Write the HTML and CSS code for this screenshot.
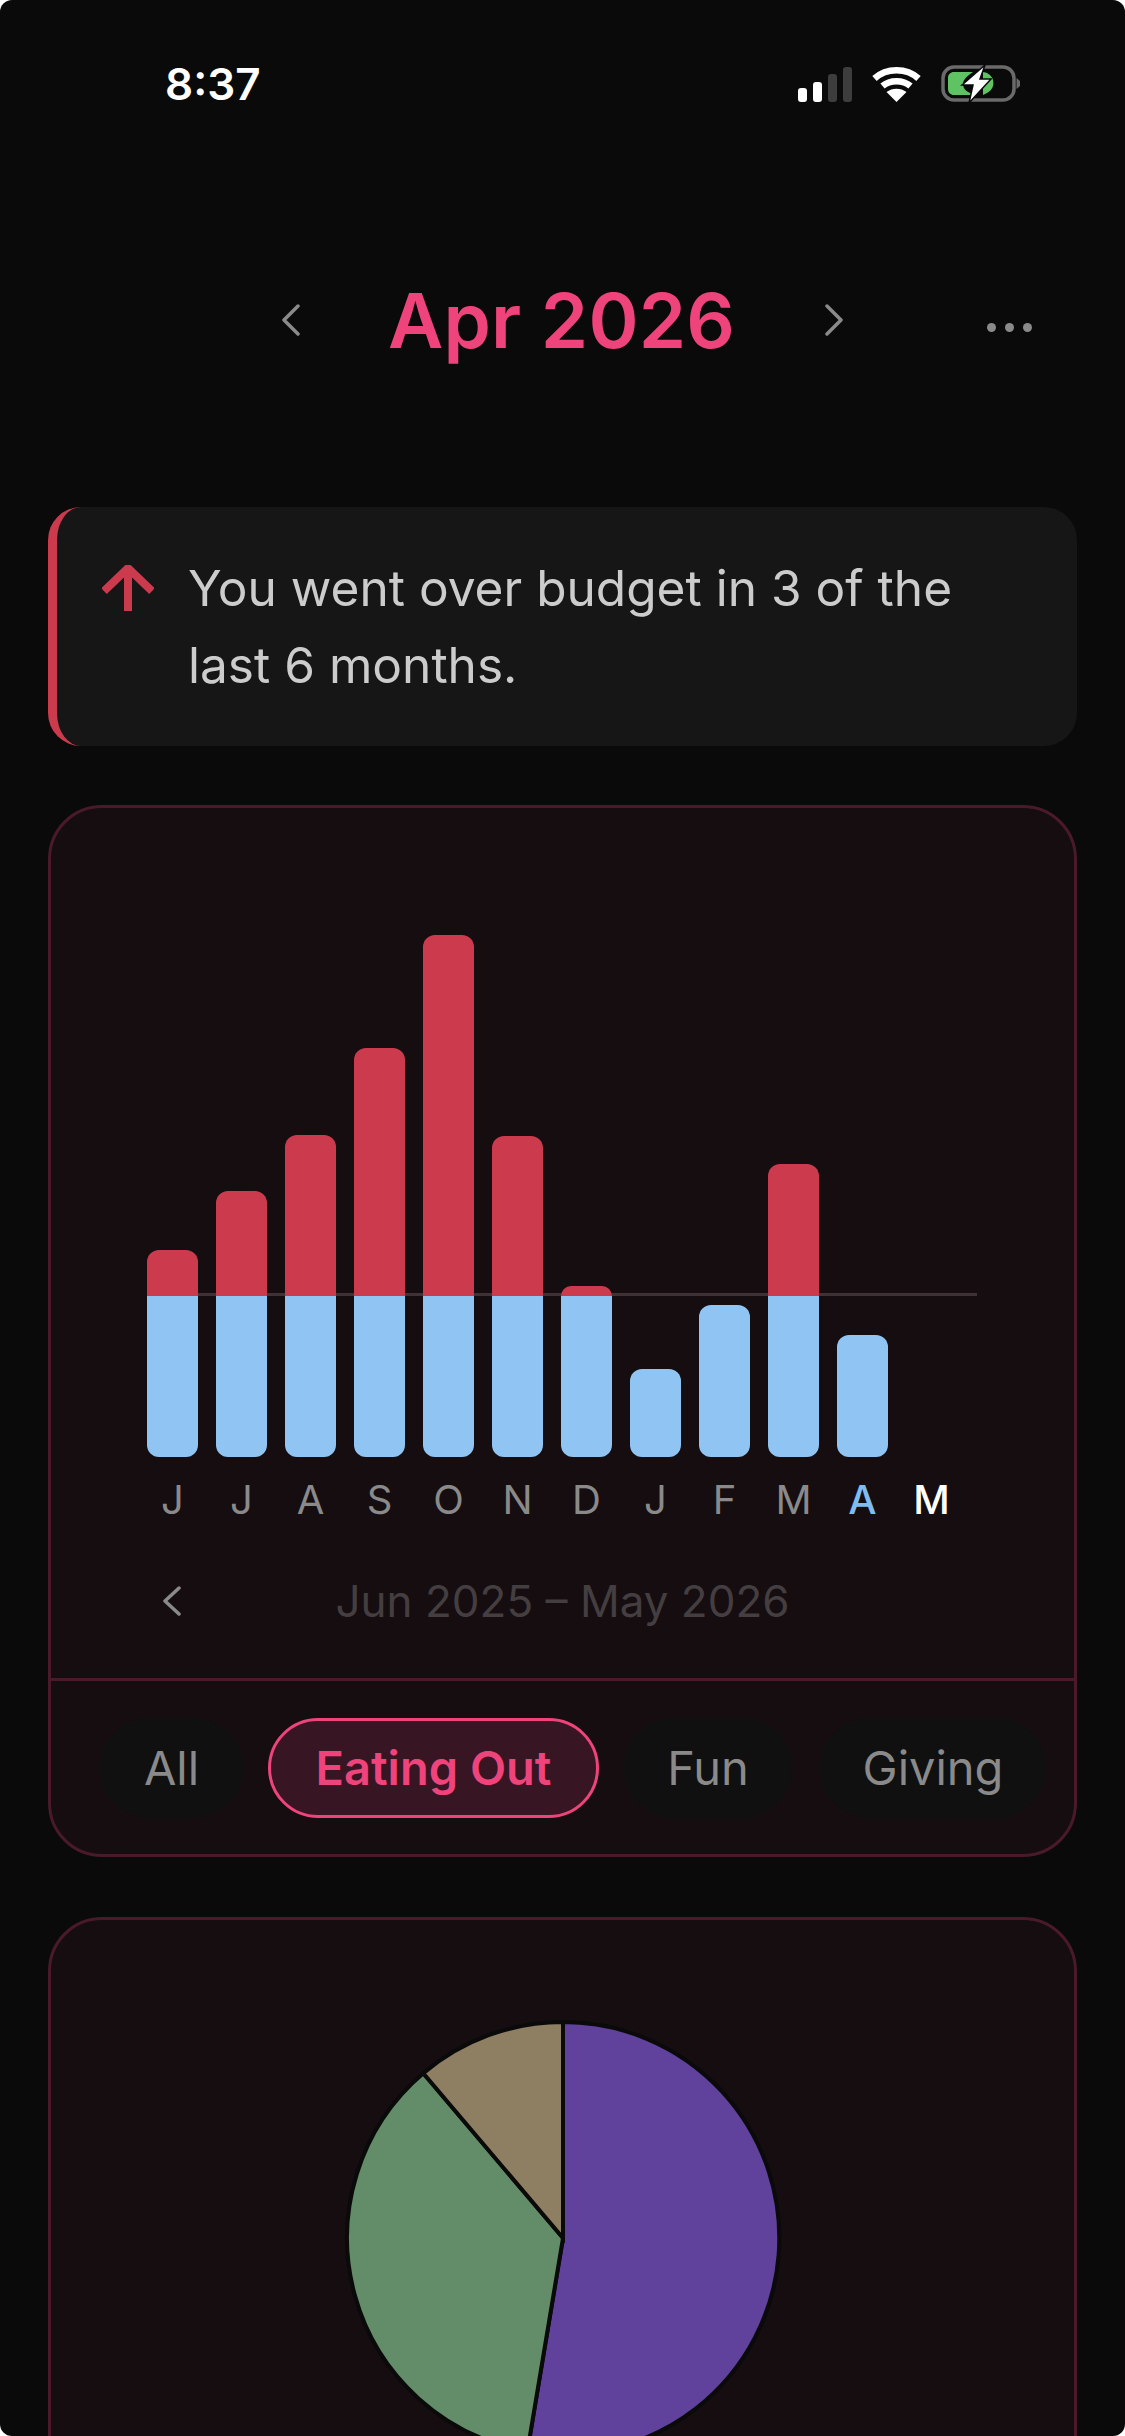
FILE: index.html
```html
<!DOCTYPE html>
<html lang="en">
<head>
    <meta charset="UTF-8">
    <meta name="viewport" content="width=device-width, initial-scale=1.0">
    <title>Budget</title>
    <link rel="stylesheet" href="styles.css">
</head>
<body>
    <div class="screen">
        <div class="status-bar">
            <span class="clock">8:37</span>
            <div class="status-icons">
                <div class="signal">
                    <span class="sig sig-1"></span>
                    <span class="sig sig-2"></span>
                    <span class="sig sig-3"></span>
                    <span class="sig sig-4"></span>
                </div>
                <svg class="wifi" width="49" height="36" viewBox="0 0 49 36">
                    <path d="M2.500 12.500C14.500 1.500 34.500 1.500 46.500 12.500" fill="none" stroke="#fff" stroke-width="6.500"/>
                    <path d="M10.500 20C18 13.500 31 13.500 38.500 20" fill="none" stroke="#fff" stroke-width="6.500"/>
                    <path d="M24.500 36L14.500 26C20 21.500 29 21.500 34.500 26Z" fill="#fff"/>
                </svg>
                <svg class="battery" width="80" height="40" viewBox="0 0 80 40">
                    <rect x="2" y="3" width="71" height="33" rx="11" fill="none" stroke="#6a6a6a" stroke-width="3.500"/>
                    <path d="M75.500 14L79 17V22L75.500 25Z" fill="#6a6a6a"/>
                    <path d="M13 8H32C26 12 22 16 22 20C22 25 26 29 36 31H13C9.500 31 7 28.500 7 25V14C7 10.500 9.500 8 13 8Z" fill="#5fc363"/>
                    <path d="M42 8A11 11 0 0 1 46 29L42 31Z" fill="#5fc363"/>
                    <path d="M44 1L21 21H32L28 39L50 15H39L44 1Z" fill="#fff" stroke="#0a0a0a" stroke-width="1.500"/>
                </svg>
            </div>
        </div>

        <div class="month-header">
            <svg class="chevron" width="18" height="32" viewBox="0 0 18 32"><path d="M16 2L2 16L16 30" fill="none" stroke="#8a8a8a" stroke-width="3.500" stroke-linecap="round" stroke-linejoin="round"/></svg>
            <h1 class="month-title">Apr 2026</h1>
            <svg class="chevron" width="18" height="32" viewBox="0 0 18 32"><path d="M2 2L16 16L2 30" fill="none" stroke="#8a8a8a" stroke-width="3.500" stroke-linecap="round" stroke-linejoin="round"/></svg>
            <div class="more">
                <span class="dot"></span>
                <span class="dot"></span>
                <span class="dot"></span>
            </div>
        </div>

        <div class="alert">
            <svg class="alert-icon" width="52" height="46" viewBox="0 0 52 46">
                <path d="M26 46V3M2 26L26 3L50 26" fill="none" stroke="#cc3a4e" stroke-width="8"/>
            </svg>
            <p class="alert-text">You went over budget in 3 of the last 6 months.</p>
        </div>

        <div class="card chart-card">
            <div class="chart">
                <div class="budget-line"></div>
                <div class="bars">
                    <div class="bar"><div class="over" style="height:46px"></div><div class="under full" style="height:161px"></div></div>
                    <div class="bar"><div class="over" style="height:105px"></div><div class="under full" style="height:161px"></div></div>
                    <div class="bar"><div class="over" style="height:161px"></div><div class="under full" style="height:161px"></div></div>
                    <div class="bar"><div class="over" style="height:248px"></div><div class="under full" style="height:161px"></div></div>
                    <div class="bar"><div class="over" style="height:361px"></div><div class="under full" style="height:161px"></div></div>
                    <div class="bar"><div class="over" style="height:160px"></div><div class="under full" style="height:161px"></div></div>
                    <div class="bar"><div class="over" style="height:10px"></div><div class="under full" style="height:161px"></div></div>
                    <div class="bar"><div class="under" style="height:88px"></div></div>
                    <div class="bar"><div class="under" style="height:152px"></div></div>
                    <div class="bar"><div class="over" style="height:132px"></div><div class="under full" style="height:161px"></div></div>
                    <div class="bar"><div class="under" style="height:122px"></div></div>
                    <div class="bar"></div>
                </div>
                <div class="labels">
                    <span>J</span><span>J</span><span>A</span><span>S</span><span>O</span><span>N</span><span>D</span><span>J</span><span>F</span><span>M</span>
                    <span class="label-current">A</span><span class="label-next">M</span>
                </div>
            </div>
            <div class="range-nav">
                <svg class="chevron range-back" width="18" height="30" viewBox="0 0 18 30"><path d="M16 2L2 15L16 28" fill="none" stroke="#8a8a8a" stroke-width="3.500" stroke-linecap="round" stroke-linejoin="round"/></svg>
                <span class="range-text">Jun 2025 – May 2026</span>
            </div>
            <div class="chips">
                <span class="chip chip-all">All</span>
                <span class="chip chip-active">Eating Out</span>
                <span class="chip chip-fun">Fun</span>
                <span class="chip chip-giving">Giving</span>
            </div>
        </div>

        <div class="card pie-card">
            <svg class="pie" width="440" height="440" viewBox="-220 -220 440 440">
                <path d="M0 0V-216A216 216 0 1 1 -35.600 213Z" fill="#60429c" stroke="#0a0a0a" stroke-width="4"/>
                <path d="M0 0L-35.600 213A216 216 0 0 1 -139.700 -164.700Z" fill="#628d68" stroke="#0a0a0a" stroke-width="4"/>
                <path d="M0 0L-139.700 -164.700A216 216 0 0 1 0 -216Z" fill="#8f7f62" stroke="#0a0a0a" stroke-width="4"/>
            </svg>
        </div>
    </div>
</body>
</html>
```

FILE: styles.css
```css
html, body {
    margin: 0;
    padding: 0;
    background-color: #fff;
}

body {
    font-family: 'Inter', 'Noto Sans', sans-serif;
    color: #ccc;
}

.screen {
    width: 1125px;
    height: 2436px;
    overflow: hidden;
    background-color: #0a0a0a;
    border-radius: 12px;
    padding: 0 48px;
    box-sizing: border-box;
}

/* status bar */
.status-bar {
    display: flex;
    justify-content: space-between;
    align-items: center;
    height: 165px;
    padding: 2px 56px 0 117px;
    box-sizing: border-box;
}

.clock {
    color: #fff;
    font-size: 44px;
    font-weight: 600;
}

.status-icons {
    display: flex;
    align-items: center;
    gap: 20px;
}

.signal {
    display: flex;
    align-items: flex-end;
    gap: 6px;
    height: 36px;
}

.sig {
    width: 9px;
    border-radius: 3px;
    background-color: #fff;
}

.sig-1 { height: 14px; }
.sig-2 { height: 20px; }
.sig-3 { height: 28px; background-color: #3d3d3d; }
.sig-4 { height: 35px; background-color: #3d3d3d; }

/* month header */
.month-header {
    display: flex;
    align-items: center;
    height: 112px;
    margin-top: 99px;
    padding-left: 234px;
}

.month-title {
    margin: 0 90px 0 88px;
    color: #ee437b;
    font-size: 76px;
    font-weight: 600;
    letter-spacing: 0.2px;
}

.more {
    display: flex;
    gap: 9px;
    margin: 14px 0 0 144px;
}

.dot {
    width: 9px;
    height: 9px;
    border-radius: 50%;
    background-color: #8a8a8a;
}

/* alert */
.alert {
    display: flex;
    align-items: flex-start;
    height: 239px;
    margin-top: 131px;
    padding: 53px 40px 0 45px;
    box-sizing: border-box;
    background-color: #161616;
    border-left: 9px solid #cc3a4e;
    border-radius: 33px;
}

.alert-icon {
    flex: none;
    margin: 5px 34px 0 0;
}

.alert-text {
    margin: 0;
    font-size: 49.600px;
    line-height: 77px;
    margin-top: -10px;
}

/* cards */
.card {
    background-color: #150d10;
    border: 3px solid #4a1a2b;
    border-radius: 54px;
    box-sizing: border-box;
}

.chart-card {
    height: 1052px;
    margin-top: 59px;
}

.chart {
    position: relative;
    padding: 127px 0 0 96px;
}

.budget-line {
    position: absolute;
    left: 96px;
    top: 485px;
    width: 830px;
    height: 3px;
    background-color: #3f3237;
}

.bars {
    position: relative;
    display: flex;
    align-items: flex-end;
    gap: 18px;
    height: 522px;
}

.bar {
    width: 51px;
    display: flex;
    flex-direction: column;
}

.over {
    background-color: #cc3a4e;
    border-radius: 12px 12px 0 0;
}

.under {
    background-color: #90c5f3;
    border-radius: 12px;
}

.under.full {
    border-radius: 0 0 12px 12px;
}

.labels {
    display: flex;
    gap: 18px;
    margin-top: 20px;
    font-size: 40px;
    line-height: 46px;
    color: #8a8a8a;
}

.labels span {
    width: 51px;
    text-align: center;
}

.label-current {
    color: #7fbcf0;
    font-weight: 500;
}

.label-next {
    color: #fff;
    font-weight: 500;
}

.range-nav {
    position: relative;
    display: flex;
    justify-content: center;
    align-items: center;
    height: 56px;
    margin-top: 50px;
}

.range-back {
    position: absolute;
    left: 112px;
}

.range-text {
    color: #443e41;
    font-size: 44px;
}

.chips {
    display: flex;
    align-items: center;
    gap: 25px;
    height: 176px;
    margin-top: 49px;
    padding: 0 0 0 49px;
    border-top: 3px solid #4a1a2b;
    box-sizing: border-box;
}

.chip {
    display: flex;
    align-items: center;
    justify-content: center;
    height: 100px;
    box-sizing: border-box;
    border-radius: 50px;
    background-color: #101010;
    color: #8a8a8a;
    font-size: 47px;
}

.chip-all { width: 143px; }
.chip-fun { width: 168px; }
.chip-giving { width: 226px; margin-left: 3px; }

.chip-active {
    width: 331px;
    background-color: #371522;
    border: 3px solid #ee437b;
    color: #ee437b;
    font-weight: 600;
}

.pie-card {
    height: 700px;
    margin-top: 60px;
    padding-top: 98px;
}

.pie {
    display: block;
    margin-left: 292px;
}
```
